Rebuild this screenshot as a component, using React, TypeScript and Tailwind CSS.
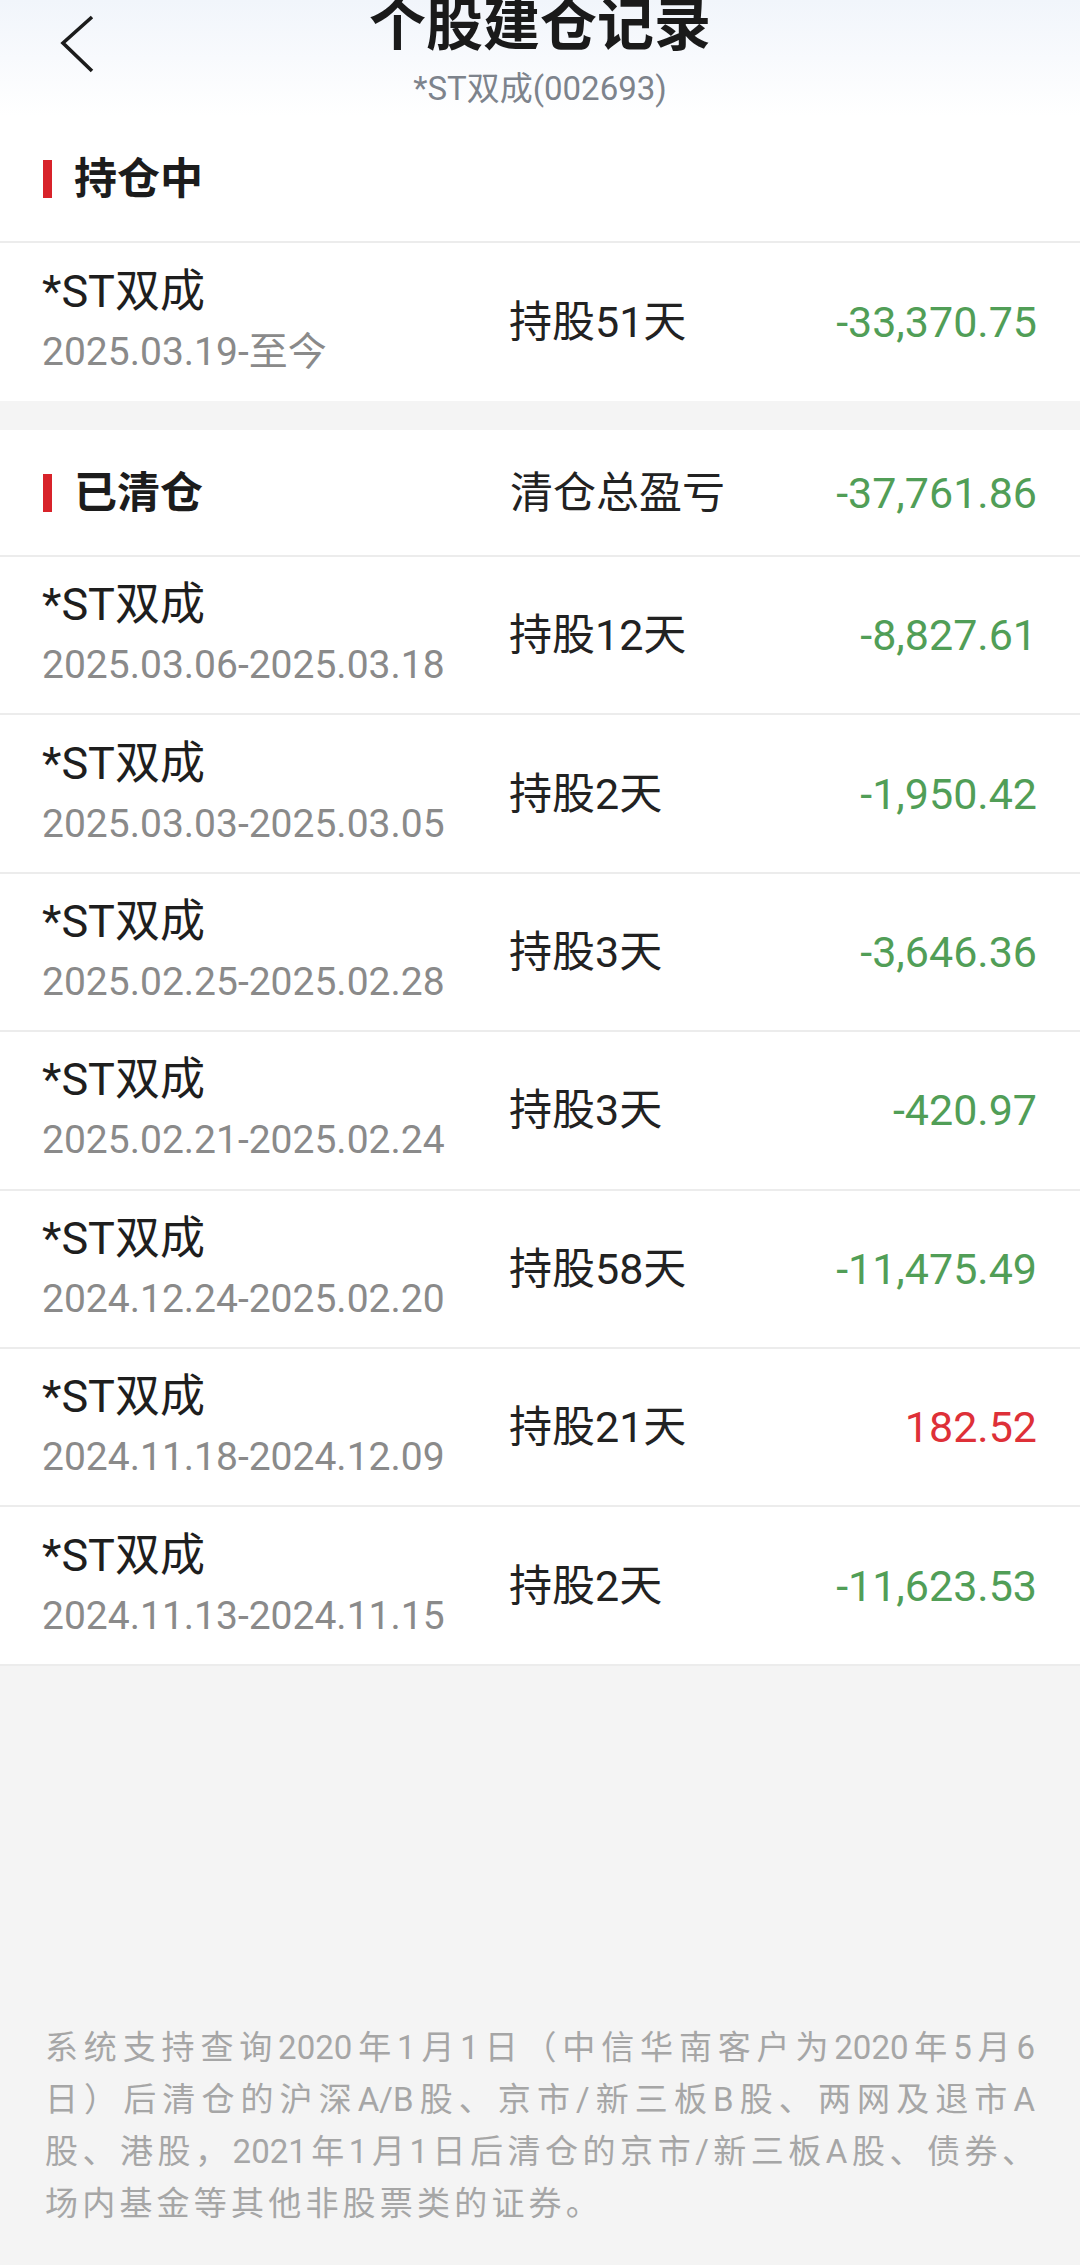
const rows = [
  { range: "2025.03.06-2025.03.18", days: "持股12天", pnl: "-8,827.61" },
  { range: "2025.03.03-2025.03.05", days: "持股2天", pnl: "-1,950.42" },
  { range: "2025.02.25-2025.02.28", days: "持股3天", pnl: "-3,646.36" },
  { range: "2025.02.21-2025.02.24", days: "持股3天", pnl: "-420.97" },
  { range: "2024.12.24-2025.02.20", days: "持股58天", pnl: "-11,475.49" },
  { range: "2024.11.18-2024.12.09", days: "持股21天", pnl: "182.52" },
  { range: "2024.11.13-2024.11.15", days: "持股2天", pnl: "-11,623.53" },
];

const BackIcon = () => (
  <svg width="44" height="66" viewBox="0 0 44 66" fill="none">
    <path d="M35 5 L6 31 L35 59" stroke="#1c1c1c" strokeWidth="3.6" />
  </svg>
);

const SectionTitle = ({ label }: { label: string }) => (
  <div className="flex items-center w-[467px]">
    <div className="w-[9px] h-[38px] bg-[#d8232a]" />
    <span className="ml-[22px] text-[43px] leading-[56px] font-bold text-[#1c1c1c]">{label}</span>
  </div>
);

const Amount = ({ value }: { value: string }) => {
  const up = !value.startsWith("-");
  return (
    <span className={`text-[43px] leading-[56px] ${up ? "text-[#de3038]" : "text-[#519e57]"}`}>
      {value}
    </span>
  );
};

const Row = ({ range, days, pnl, h }: { range: string; days: string; pnl: string; h: string }) => (
  <div className={`flex items-center pl-[42px] pr-[43px] ${h}`}>
    <div className="flex flex-col w-[467px]">
      <span className="text-[45px] leading-[61px] text-[#1e1e1e]">*ST双成</span>
      <span className="text-[39px] leading-[61px] text-[#8a8a8a]">{range}</span>
    </div>
    <span className="flex-1 text-[43px] leading-[56px] text-[#222]">{days}</span>
    <Amount value={pnl} />
  </div>
);

export default function App() {
  return (
    <div className="w-[1080px] min-h-[2265px] flex flex-col bg-[#f4f4f4] font-['Roboto','Noto_Sans_CJK_SC',sans-serif]">
      <div className="h-[116px] grid grid-cols-[1fr_auto_1fr] bg-gradient-to-b from-[#f1f5fb] to-white">
        <div className="pl-[57px] pt-[12px]">
          <BackIcon />
        </div>
        <div className="flex flex-col items-center">
          <h1 className="mt-[-3px] text-[57px] leading-[57px] font-bold text-[#1a1a1a]">个股建仓记录</h1>
          <p className="mt-[15px] text-[33px] leading-[40px] text-[#7d838c]">*ST双成(002693)</p>
        </div>
        <div />
      </div>

      <div className="bg-white">
        <div className="h-[127px] flex items-center pl-[43px] border-b-2 border-[#ececec]">
          <SectionTitle label="持仓中" />
        </div>
        <Row range="2025.03.19-至今" days="持股51天" pnl="-33,370.75" h="h-[158px]" />
      </div>

      <div className="h-[29px]" />

      <div className="bg-white">
        <div className="h-[127px] flex items-center pl-[43px] pr-[43px] border-b-2 border-[#ececec]">
          <SectionTitle label="已清仓" />
          <span className="flex-1 text-[43px] leading-[56px] text-[#222]">清仓总盈亏</span>
          <Amount value="-37,761.86" />
        </div>
        {rows.map((r) => (
          <div key={r.range} className="border-b-2 border-[#ececec]">
            <Row {...r} h="h-[156.4px]" />
          </div>
        ))}
      </div>

      <div className="flex-1 flex flex-col justify-end px-[45px] pb-[35px] text-[33px] leading-[52px] text-[#a6a6a6]">
        <p className="text-justify [text-align-last:justify]">系统支持查询2020年1月1日（中信华南客户为2020年5月6</p>
        <p className="text-justify [text-align-last:justify]">日）后清仓的沪深A/B股、京市/新三板B股、两网及退市A</p>
        <p className="text-justify [text-align-last:justify]">股、港股，2021年1月1日后清仓的京市/新三板A股、债券、</p>
        <p className="tracking-[4.2px]">场内基金等其他非股票类的证券。</p>
      </div>
    </div>
  );
}
